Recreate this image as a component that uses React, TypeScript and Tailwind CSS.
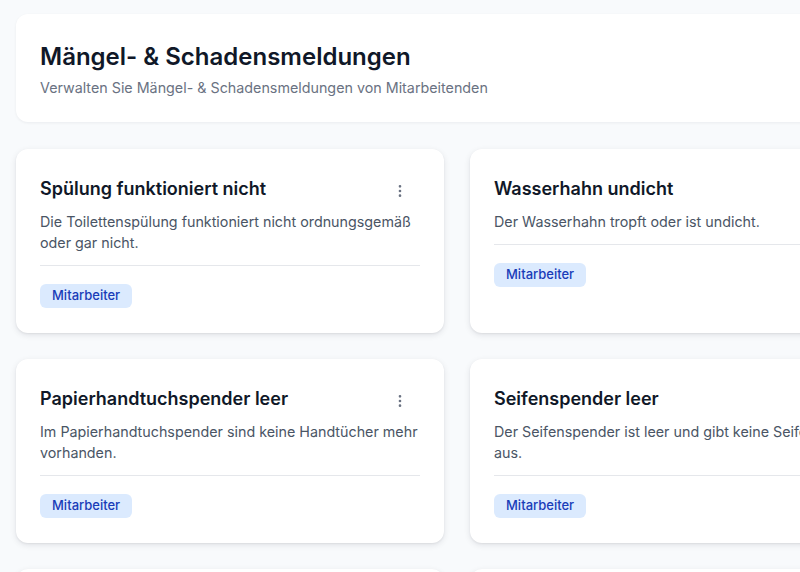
import { MoreVertical } from "lucide-react"

type Report = {
  title: string
  description: string
  role: string
}

const reports: Report[] = [
  {
    title: "Spülung funktioniert nicht",
    description: "Die Toilettenspülung funktioniert nicht ordnungsgemäß oder gar nicht.",
    role: "Mitarbeiter",
  },
  {
    title: "Wasserhahn undicht",
    description: "Der Wasserhahn tropft oder ist undicht.",
    role: "Mitarbeiter",
  },
  {
    title: "Papierhandtuchspender leer",
    description: "Im Papierhandtuchspender sind keine Handtücher mehr vorhanden.",
    role: "Mitarbeiter",
  },
  {
    title: "Seifenspender leer",
    description: "Der Seifenspender ist leer und gibt keine Seife mehr aus.",
    role: "Mitarbeiter",
  },
  {
    title: "Licht defekt",
    description: "Die Beleuchtung im Raum funktioniert nicht.",
    role: "Mitarbeiter",
  },
  {
    title: "Mülleimer voll",
    description: "Der Mülleimer ist voll und muss geleert werden.",
    role: "Mitarbeiter",
  },
]

function ReportCard({ report }: { report: Report }) {
  return (
    <div className="flex flex-col rounded-xl bg-white px-6 pt-6 pb-[25px] shadow-[0_2px_6px_rgba(15,23,42,0.10),0_1px_2px_rgba(15,23,42,0.06)]">
      <div className="flex items-start justify-between gap-4">
        <h2 className="mt-0.5 text-lg leading-7 font-semibold text-gray-900">{report.title}</h2>
        <button className="mt-0.5 mr-1 -mb-1 flex h-8 w-8 shrink-0 items-center justify-center rounded-md text-gray-500">
          <MoreVertical size={16} />
        </button>
      </div>
      <p className="mt-2 text-[14.3px] leading-[21px] text-gray-600">{report.description}</p>
      <div className="mt-3 flex border-t border-gray-200 pt-[18px]">
        <span className="inline-flex h-6 items-center rounded-md bg-blue-100 px-3 text-[13px] font-medium text-blue-800">
          {report.role}
        </span>
      </div>
    </div>
  )
}

export default function App() {
  return (
    <div
      className="h-[572px] w-[800px] overflow-hidden bg-slate-50"
      style={{ fontFamily: "Inter, 'Noto Sans', sans-serif" }}
    >
      <div className="w-[914px] px-4 pt-[14px]">
        <div className="rounded-xl bg-white p-6 shadow-[0_1px_3px_rgba(15,23,42,0.06)]">
          <h1 className="mt-[3px] text-2xl leading-8 font-semibold text-gray-900">Mängel- &amp; Schadensmeldungen</h1>
          <p className="mt-[5px] text-[14.3px] leading-5 text-gray-500">
            Verwalten Sie Mängel- &amp; Schadensmeldungen von Mitarbeitenden
          </p>
        </div>
        <div className="mt-[27px] grid grid-cols-2 gap-[26px]">
          {reports.map((r) => (
            <ReportCard key={r.title} report={r} />
          ))}
        </div>
      </div>
    </div>
  )
}
